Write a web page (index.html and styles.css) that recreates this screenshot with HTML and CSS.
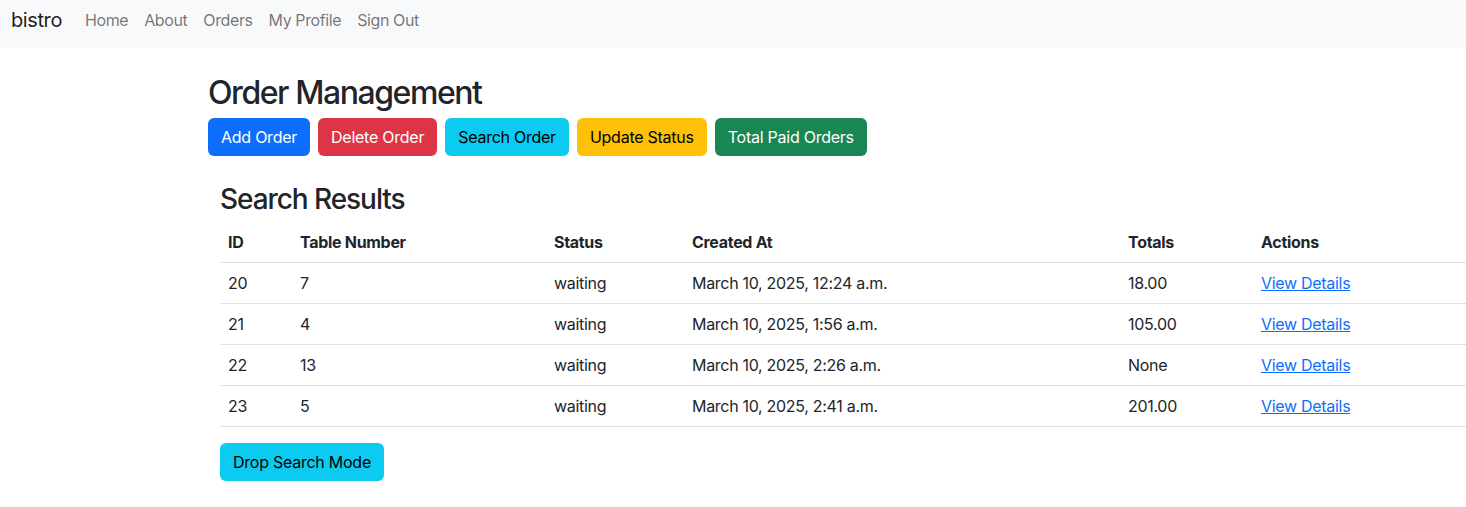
FILE: index.html
```html
<!DOCTYPE html>
<html lang="en">
<head>
<meta charset="utf-8">
<title>bistro</title>
<link rel="stylesheet" href="styles.css">
</head>
<body>
<nav class="navbar">
  <a class="brand" href="#">bistro</a>
  <ul class="nav">
    <li><a class="nav-link" href="#">Home</a></li>
    <li><a class="nav-link" href="#">About</a></li>
    <li><a class="nav-link" href="#">Orders</a></li>
    <li><a class="nav-link" href="#">My Profile</a></li>
    <li><a class="nav-link" href="#">Sign Out</a></li>
  </ul>
</nav>
<main class="page">
  <h2 class="title">Order Management</h2>
  <div class="actions">
    <button class="btn btn-primary">Add Order</button>
    <button class="btn btn-danger">Delete Order</button>
    <button class="btn btn-info">Search Order</button>
    <button class="btn btn-warning">Update Status</button>
    <button class="btn btn-success">Total Paid Orders</button>
  </div>
  <section class="results">
    <h3 class="subtitle">Search Results</h3>
    <table class="table">
      <colgroup>
        <col class="c-id"><col class="c-table"><col class="c-status"><col class="c-created"><col class="c-totals"><col class="c-actions">
      </colgroup>
      <thead>
        <tr><th>ID</th><th>Table Number</th><th>Status</th><th>Created At</th><th>Totals</th><th>Actions</th></tr>
      </thead>
      <tbody>
        <tr><td>20</td><td>7</td><td>waiting</td><td>March 10, 2025, 12:24 a.m.</td><td>18.00</td><td><a href="#">View Details</a></td></tr>
        <tr><td>21</td><td>4</td><td>waiting</td><td>March 10, 2025, 1:56 a.m.</td><td>105.00</td><td><a href="#">View Details</a></td></tr>
        <tr><td>22</td><td>13</td><td>waiting</td><td>March 10, 2025, 2:26 a.m.</td><td>None</td><td><a href="#">View Details</a></td></tr>
        <tr><td>23</td><td>5</td><td>waiting</td><td>March 10, 2025, 2:41 a.m.</td><td>201.00</td><td><a href="#">View Details</a></td></tr>
      </tbody>
    </table>
    <button class="btn btn-info">Drop Search Mode</button>
  </section>
</main>
</body>
</html>
```
FILE: styles.css
```css
* { box-sizing: border-box; }
html, body { margin: 0; padding: 0; }
body {
  font-family: Inter, "Noto Sans", "Liberation Sans", sans-serif;
  font-size: 16px;
  line-height: 1.5;
  letter-spacing: -0.3px;
  color: #212529;
  background: #fff;
  overflow: hidden;
}
.navbar {
  display: flex;
  align-items: center;
  background: #f8f9fa;
  height: 48px;
  padding: 0 11px 8px;
}
.brand {
  font-size: 20px;
  color: rgba(0,0,0,.9);
  text-decoration: none;
  margin-right: 15px;
  line-height: 30px;
  letter-spacing: -0.4px;
}
.nav { list-style: none; margin: 0; padding: 0; display: flex; }
.nav-link {
  display: block;
  padding: 8px;
  color: rgba(0,0,0,.55);
  text-decoration: none;
  letter-spacing: -0.4px;
}
.page { padding-left: 208px; padding-top: 26px; }
.title {
  font-size: 32px;
  font-weight: 500;
  line-height: 1.2;
  letter-spacing: -0.045em;
  margin: 0 0 6px;
}
.actions { display: flex; gap: 8px; }
.btn {
  font-family: inherit;
  font-size: 16px;
  line-height: 24px;
  letter-spacing: -0.25px;
  padding: 6px 12px;
  border: 1px solid transparent;
  border-radius: 6px;
  cursor: pointer;
}
.btn-primary { background: #0d6efd; color: #fff; }
.btn-danger { background: #dc3545; color: #fff; }
.btn-info { background: #0dcaf0; color: #000; }
.btn-warning { background: #ffc107; color: #000; }
.btn-success { background: #198754; color: #fff; }
.results { margin-left: 12px; padding-top: 27px; }
.subtitle {
  font-size: 28px;
  font-weight: 500;
  line-height: 1.2;
  letter-spacing: -0.038em;
  margin: 0 0 5px;
}
.table {
  width: 1246px;
  border-collapse: collapse;
  table-layout: fixed;
  margin-bottom: 16px;
}
.c-id { width: 72px; }
.c-table { width: 254px; }
.c-status { width: 138px; }
.c-created { width: 436px; }
.c-totals { width: 133px; }
.c-actions { width: 213px; }
.table th, .table td {
  padding: 8px;
  text-align: left;
  border-bottom: 1px solid #dee2e6;
  vertical-align: top;
}
.table th { font-weight: 700; }
.table a { color: #0d6efd; text-decoration: underline; }
```
